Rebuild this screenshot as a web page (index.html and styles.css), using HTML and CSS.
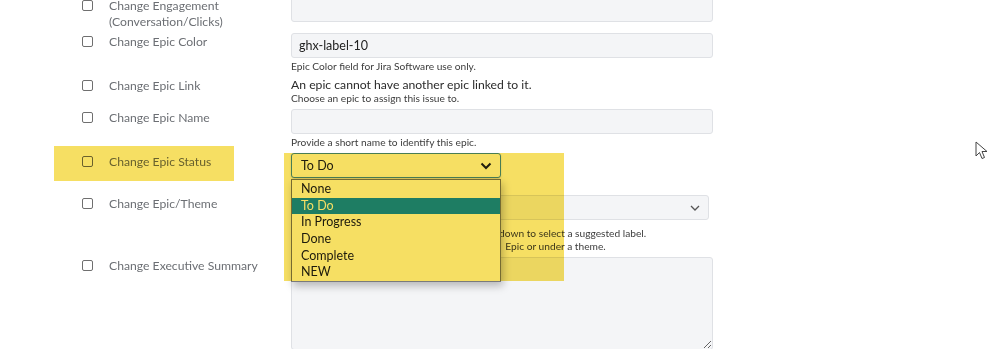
FILE: index.html
```html
<!DOCTYPE html>
<html lang="en">
	<head>
		<meta charset="UTF-8" />
		<meta name="viewport" content="width=device-width, initial-scale=1.0" />
		<title>Bulk edit fields</title>
		<link rel="stylesheet" href="styles.css">
	</head>
	<body>
		<div class="form">
			<div class="row row-first">
				<div class="label-cell">
					<span class="check"></span>
					<label>Change Engagement<br>(Conversation/Clicks)</label>
				</div>
				<div class="field">
					<div class="input"></div>
				</div>
			</div>

			<div class="row">
				<div class="label-cell">
					<span class="check"></span>
					<label>Change Epic Color</label>
				</div>
				<div class="field">
					<div class="input">ghx-label-10</div>
					<div class="help">Epic Color field for Jira Software use only.</div>
				</div>
			</div>

			<div class="row">
				<div class="label-cell">
					<span class="check"></span>
					<label>Change Epic Link</label>
				</div>
				<div class="field">
					<div class="note">An epic cannot have another epic linked to it.</div>
					<div class="help help-tight">Choose an epic to assign this issue to.</div>
				</div>
			</div>

			<div class="row">
				<div class="label-cell">
					<span class="check"></span>
					<label>Change Epic Name</label>
				</div>
				<div class="field">
					<div class="input"></div>
					<div class="help">Provide a short name to identify this epic.</div>
				</div>
			</div>

			<div class="row row-status">
				<div class="label-cell">
					<span class="check"></span>
					<label>Change Epic Status</label>
				</div>
				<div class="field">
					<div class="select select-open">
						<span>To Do</span>
						<svg class="chevron" width="12" height="8" viewBox="0 0 12 8"><path d="M1.5 1.5 L6 6 L10.5 1.5" fill="none" stroke="#222" stroke-width="2"/></svg>
					</div>
					<ul class="options">
						<li>None</li>
						<li class="selected">To Do</li>
						<li>In Progress</li>
						<li>Done</li>
						<li>Complete</li>
						<li>NEW</li>
					</ul>
				</div>
			</div>

			<div class="row">
				<div class="label-cell">
					<span class="check"></span>
					<label>Change Epic/Theme</label>
				</div>
				<div class="field">
					<div class="select select-wide">
						<span></span>
						<svg class="chevron" width="10" height="6" viewBox="0 0 10 6"><path d="M1 1 L5 5 L9 1" fill="none" stroke="#555" stroke-width="1.3"/></svg>
					</div>
					<div class="help help-spaced">Begin typing to find and create labels, or press down to select a suggested label.</div>
					<div class="help help-tight"><span class="under-menu">Choose the theme this issue belongs to, as an</span> Epic or under a theme.</div>
				</div>
			</div>

			<div class="row">
				<div class="label-cell">
					<span class="check"></span>
					<label>Change Executive Summary</label>
				</div>
				<div class="field">
					<textarea class="textarea"></textarea>
				</div>
			</div>
		</div>

		<div class="mark mark-label"></div>
		<div class="mark mark-menu"></div>

		<svg class="cursor" width="14" height="20" viewBox="0 0 14 20">
			<path d="M1 1 L1 15 L4.5 11.5 L7 17.5 L9.5 16.5 L7 10.5 L12 10.5 Z" fill="#fff" stroke="#444" stroke-width="1" stroke-linejoin="round"/>
		</svg>
	</body>
</html>
```

FILE: styles.css
```css
body {
	margin: 0;
	background: #fff;
	font-family: Lato, "Noto Sans", sans-serif;
	color: #333;
	overflow: hidden;
	position: relative;
	height: 349px;
}

.form {
	margin-top: -3px;
	padding-left: 82px;
}

.row {
	display: flex;
	margin-bottom: 4px;
}

.row-first {
	margin-bottom: 3px;
}

.row-status {
	min-height: 38px;
}

.label-cell {
	width: 209px;
	display: flex;
	align-items: flex-start;
}

.check {
	width: 9px;
	height: 9px;
	border: 1px solid #6f6f6f;
	border-radius: 2px;
	margin-top: 3px;
	margin-right: 16px;
	flex-shrink: 0;
}

label {
	font-size: 12.2px;
	line-height: 16px;
	color: #6c6f74;
	padding-top: 1px;
}

.field {
	width: 422px;
	position: relative;
}

.input {
	height: 23px;
	border: 1px solid #dfe1e5;
	border-radius: 3px;
	background: #f4f5f7;
	font-size: 12.5px;
	line-height: 23px;
	padding-left: 7px;
	color: #222;
}

.help {
	font-size: 10.2px;
	line-height: 14px;
	color: #3d3d3d;
	margin-top: 1px;
}

.help-tight {
	margin-top: 0;
	line-height: 13px;
}

.help-spaced {
	margin-top: 6px;
	white-space: nowrap;
}

.under-menu {
	letter-spacing: 0.15px;
	margin-right: 2px;
}

.note {
	font-size: 12.2px;
	line-height: 15px;
	color: #2b2b2b;
}

.select {
	height: 23px;
	border: 1px solid #dfe1e5;
	border-radius: 3px;
	background: #f4f5f7;
	display: flex;
	align-items: center;
	justify-content: space-between;
	padding: 0 8px 0 9px;
	font-size: 12.5px;
	color: #222;
}

.select-open {
	width: 191px;
	background: #fff;
	border-color: #4a8fdb;
	box-shadow: 0 1px 2px rgba(0, 0, 0, 0.15);
}

.select-wide {
	width: 399px;
	padding-right: 8px;
}

.options {
	position: absolute;
	left: 0;
	top: 26px;
	width: 208px;
	margin: 0;
	padding: 1px 0 0;
	list-style: none;
	background: #fff;
	border: 1px solid #7a7a7a;
	box-shadow: 2px 4px 8px rgba(0, 0, 0, 0.25);
	z-index: 2;
}

.options li {
	height: 16.7px;
	line-height: 16.7px;
	padding-left: 9px;
	font-size: 12.5px;
	color: #1d1d1d;
}

.options .selected {
	background: #1f8fff;
	color: #fff;
}

.textarea {
	display: block;
	box-sizing: border-box;
	width: 422px;
	height: 93px;
	margin: 0;
	border: 1px solid #dfe1e5;
	border-radius: 3px;
	background: #f4f5f7;
	font-family: inherit;
}

/* highlighter marks on top of the screenshot */
.mark {
	position: absolute;
	background: #f6df63;
	mix-blend-mode: multiply;
	z-index: 5;
}

.mark-label {
	left: 54px;
	top: 146px;
	width: 180px;
	height: 35px;
}

.mark-menu {
	left: 284px;
	top: 153px;
	width: 280px;
	height: 128px;
}

.cursor {
	position: absolute;
	left: 975px;
	top: 141px;
	z-index: 6;
}
```
